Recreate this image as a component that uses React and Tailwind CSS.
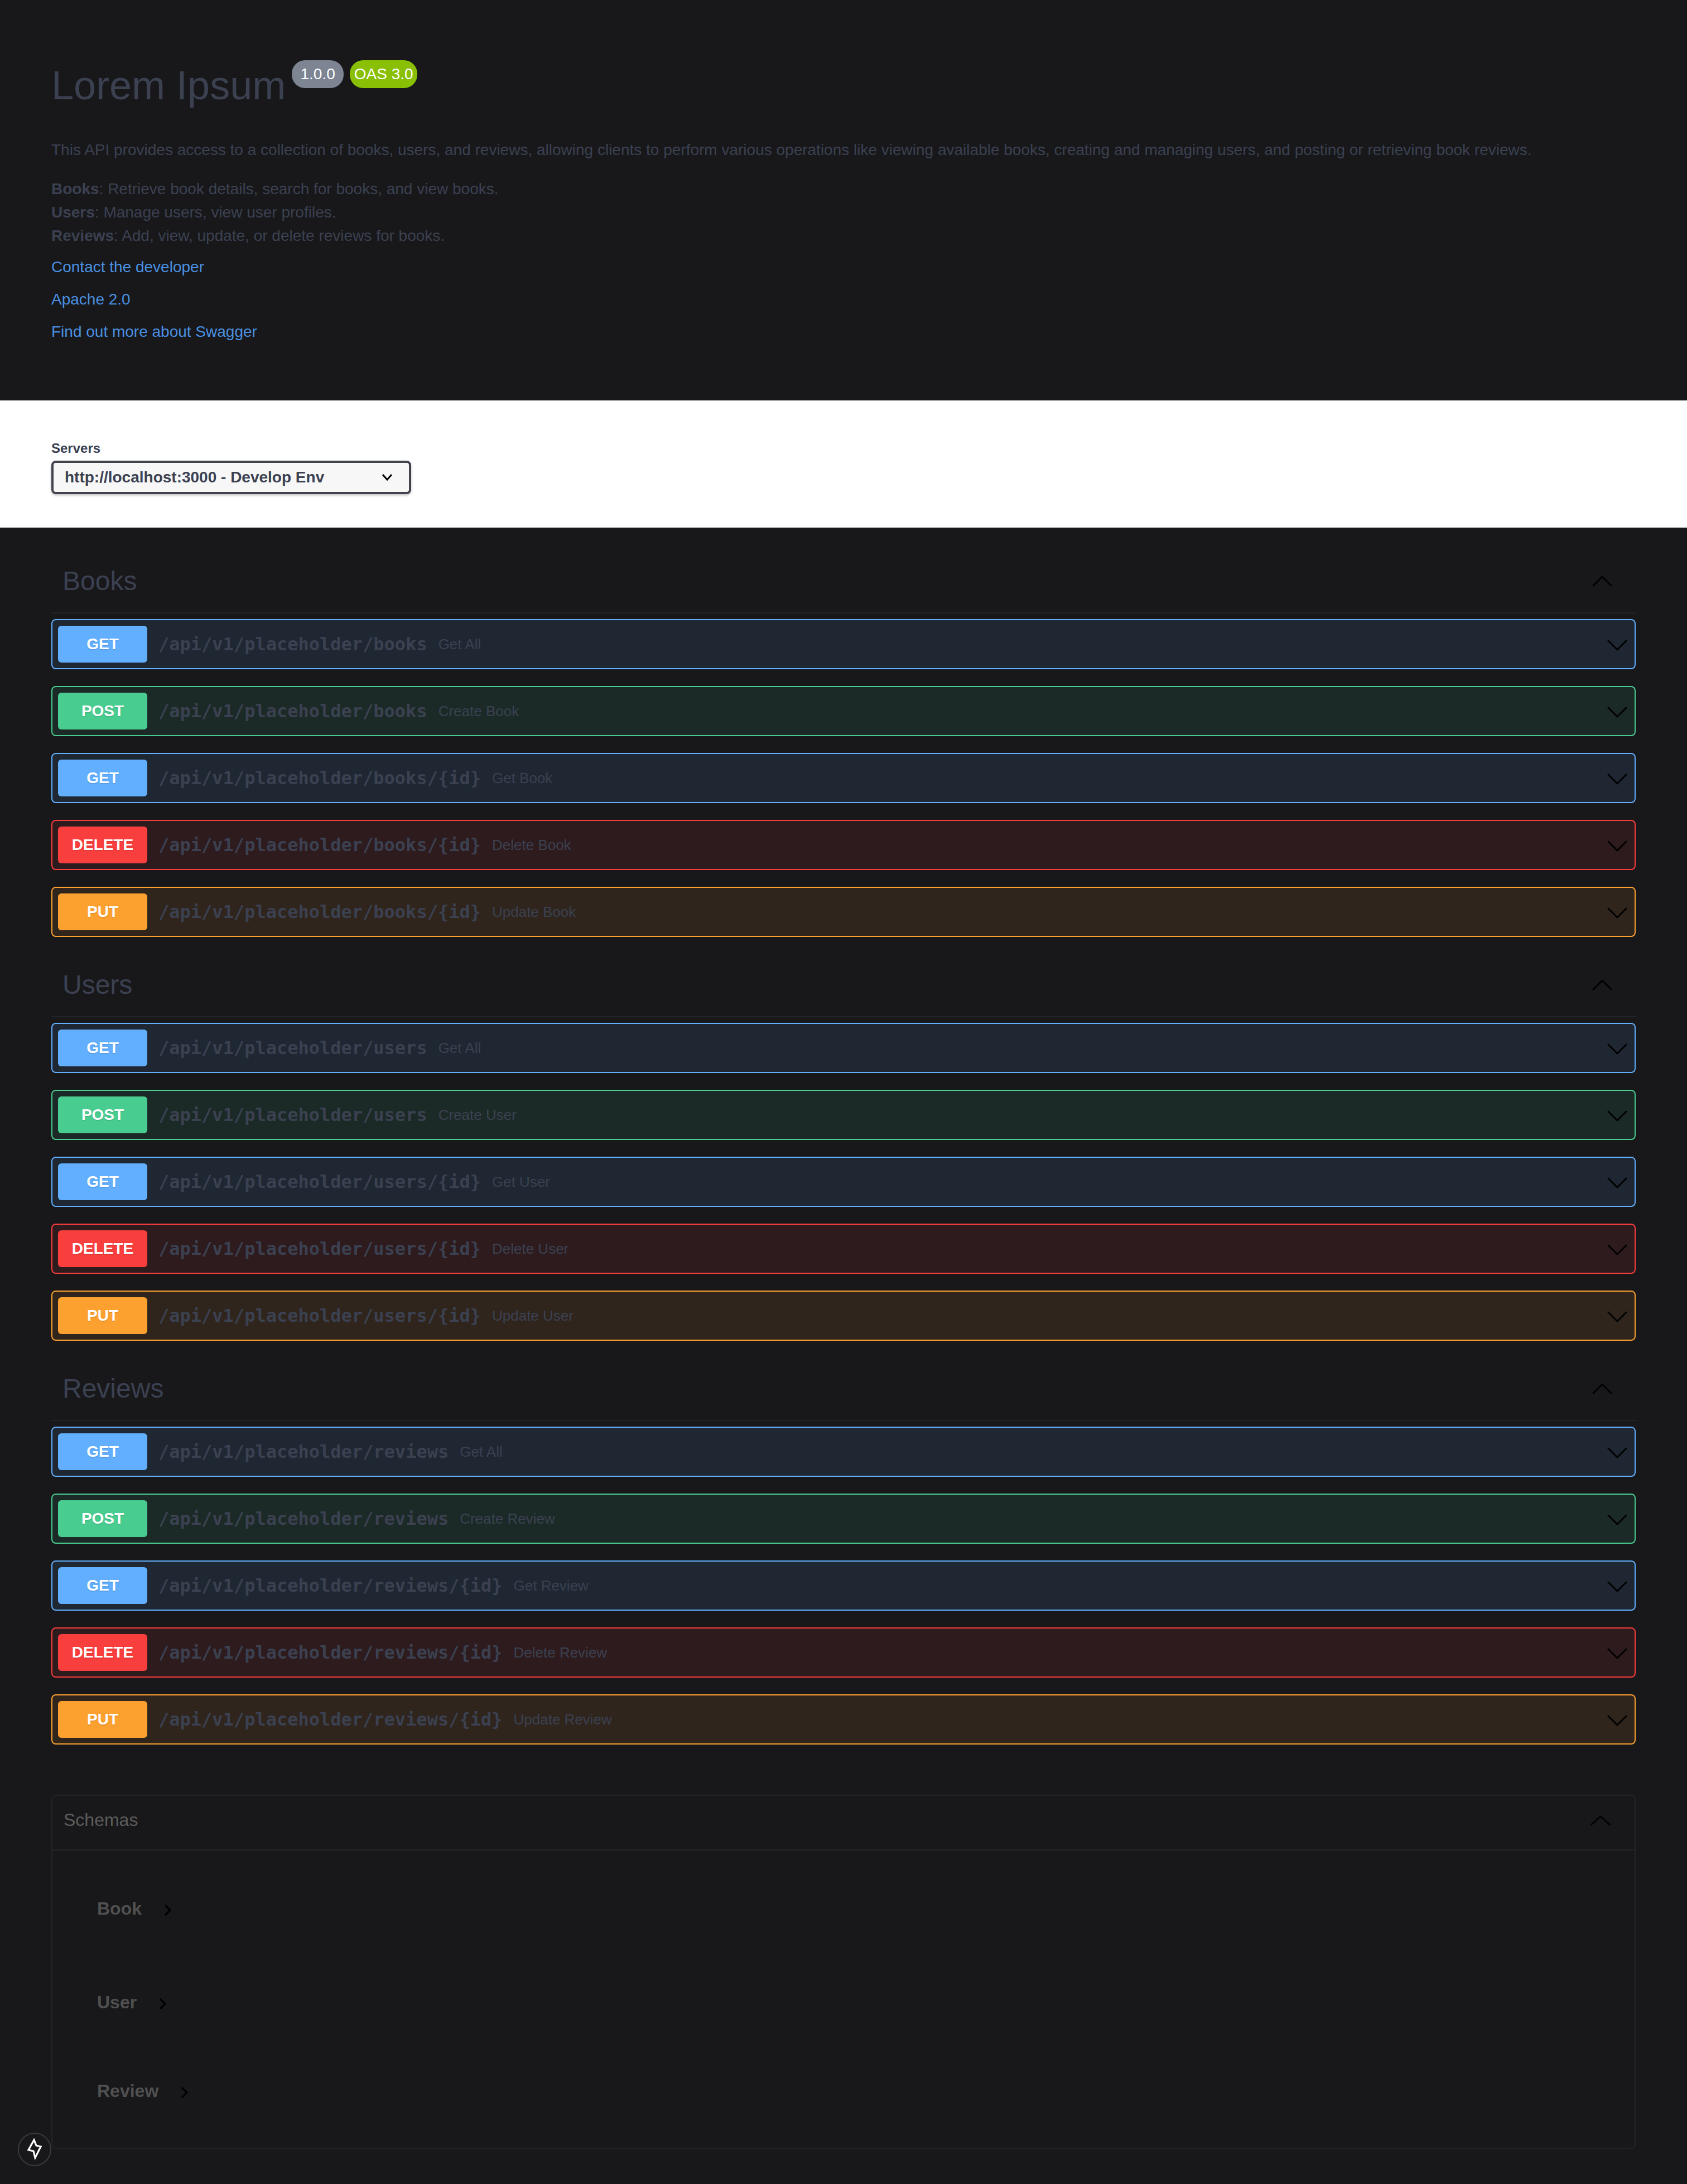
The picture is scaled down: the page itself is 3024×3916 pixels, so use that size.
const METHODS = {
  GET: { box: "border-[#61affe] bg-[#61affe]/10", btn: "bg-[#61affe]" },
  POST: { box: "border-[#49cc90] bg-[#49cc90]/10", btn: "bg-[#49cc90]" },
  DELETE: { box: "border-[#f93e3e] bg-[#f93e3e]/10", btn: "bg-[#f93e3e]" },
  PUT: { box: "border-[#fca130] bg-[#fca130]/10", btn: "bg-[#fca130]" },
};

const crud = (plural, Single) => [
  ["GET", `/api/v1/placeholder/${plural}`, "Get All"],
  ["POST", `/api/v1/placeholder/${plural}`, `Create ${Single}`],
  ["GET", `/api/v1/placeholder/${plural}/{id}`, `Get ${Single}`],
  ["DELETE", `/api/v1/placeholder/${plural}/{id}`, `Delete ${Single}`],
  ["PUT", `/api/v1/placeholder/${plural}/{id}`, `Update ${Single}`],
];

const TAGS = [
  { name: "Books", ops: crud("books", "Book") },
  { name: "Users", ops: crud("users", "User") },
  { name: "Reviews", ops: crud("reviews", "Review") },
];

function Chevron({ up }) {
  return (
    <svg width="36" height="20" viewBox="0 0 36 20" fill="none" className="shrink-0">
      <polyline
        points={up ? "2,18 18,2 34,18" : "2,2 18,18 34,2"}
        stroke="#000"
        strokeWidth="3"
        strokeLinecap="round"
        strokeLinejoin="round"
      />
    </svg>
  );
}

function ModelRow({ name, className }) {
  return (
    <div className={`flex h-[36px] items-center gap-[40px] pl-[80px] ${className}`}>
      <span className="text-[32px] font-bold leading-[36px] text-[#505050]">{name}</span>
      <svg width="14" height="22" viewBox="0 0 14 22" fill="none" className="mt-[5px] shrink-0">
        <polyline points="2,2 11,11 2,20" stroke="#000" strokeWidth="3.2" />
      </svg>
    </div>
  );
}

function Operation({ method, path, summary }) {
  const m = METHODS[method];
  return (
    <div className={`mb-[30px] flex h-[90px] items-center rounded-[8px] border-2 pl-[10px] pr-[13px] ${m.box}`}>
      <div
        className={`flex h-[66px] w-[160px] shrink-0 items-center justify-center rounded-[6px] text-[28px] font-bold text-white [text-shadow:0_2px_0_rgba(0,0,0,0.1)] ${m.btn}`}
      >
        {method}
      </div>
      <span className="ml-[20px] font-['DejaVu_Sans_Mono',monospace] text-[32px] font-bold text-[#3b4151]">{path}</span>
      <span className="ml-[20px] text-[26px] text-[#3b4151]">{summary}</span>
      <div className="ml-auto mt-[4px] flex">
        <Chevron />
      </div>
    </div>
  );
}

function Tag({ name, ops }) {
  return (
    <section>
      <div className="mb-[10px] flex h-[114px] items-center justify-between border-b-2 border-[#22242b] pl-[20px] pr-[42px]">
        <h3 className="text-[48px] font-normal leading-[56px] text-[#3b4151]">{name}</h3>
        <Chevron up />
      </div>
      {ops.map(([method, path, summary], i) => (
        <Operation key={i} method={method} path={path} summary={summary} />
      ))}
    </section>
  );
}

export default function App() {
  return (
    <div className="relative min-h-[3916px] bg-[#18181b] font-['Liberation_Sans',Arial,sans-serif]">
      <header className="px-[92px] pb-[102px] pt-[113px]">
        <div className="flex items-start">
          <h1 className="text-[72px] font-normal leading-[80px] text-[#3b4151]">Lorem Ipsum</h1>
          <div className="-mt-[5px] ml-[11px] flex gap-[11px]">
            <span className="flex h-[50px] w-[93px] items-center justify-center rounded-[24px] bg-[#7d8492] text-[28px] text-white">1.0.0</span>
            <span className="flex h-[50px] w-[121px] items-center justify-center rounded-[24px] bg-[#89bf04] text-[28px] text-white">OAS 3.0</span>
          </div>
        </div>
        <p className="mt-[55px] text-[28px] leading-[42px] text-[#3b4151]">
          This API provides access to a collection of books, users, and reviews, allowing clients to perform various operations like viewing available books, creating and managing users, and posting or retrieving book reviews.
        </p>
        <div className="mt-[28px] text-[28px] leading-[42px] text-[#3b4151]">
          <div><b>Books</b>: Retrieve book details, search for books, and view books.</div>
          <div><b>Users</b>: Manage users, view user profiles.</div>
          <div><b>Reviews</b>: Add, view, update, or delete reviews for books.</div>
        </div>
        <div className="mt-[14px] flex flex-col gap-[16px] text-[28px] leading-[42px] text-[#4990e2]">
          <a>Contact the developer</a>
          <a>Apache 2.0</a>
          <a>Find out more about Swagger</a>
        </div>
      </header>

      <div className="h-[228px] bg-white px-[92px] pt-[72px]">
        <div className="text-[24px] font-bold leading-[28px] text-[#3b4151]">Servers</div>
        <div className="mt-[8px] flex h-[60px] w-[645px] items-center justify-between rounded-[8px] border-4 border-[#41444e] bg-[#f7f7f7] pl-[20px] pr-[29px] shadow-[0_2px_4px_0_rgba(0,0,0,0.25)]">
          <span className="text-[28px] font-bold text-[#3b4151]">http://localhost:3000 - Develop Env</span>
          <svg width="20" height="14" viewBox="0 0 20 14" fill="none">
            <polyline points="2,2 10,11 18,2" stroke="#000" strokeWidth="3" />
          </svg>
        </div>
      </div>

      <main className="px-[92px] pt-[40px]">
        {TAGS.map((t) => (
          <Tag key={t.name} name={t.name} ops={t.ops} />
        ))}

        <section className="mt-[90px] rounded-[8px] border-2 border-[#22242b]">
          <div className="flex h-[98px] items-center justify-between border-b-2 border-[#22242b] pl-[20px] pr-[43px]">
            <h4 className="mb-[10px] text-[32px] font-normal text-[#5c5c5c]">Schemas</h4>
            <svg width="36" height="20" viewBox="0 0 36 20" fill="none" className="mb-[8px] shrink-0">
              <polyline points="1,18 18,3 35,18" stroke="#000" strokeWidth="3" strokeLinecap="round" strokeLinejoin="round" />
            </svg>
          </div>
          <div className="pb-[84px] pt-[86px]">
            <ModelRow name="Book" className="mb-[132px]" />
            <ModelRow name="User" className="mb-[123px]" />
            <ModelRow name="Review" />
          </div>
        </section>
      </main>

      <button className="fixed bottom-[32px] left-[32px] flex h-[60px] w-[60px] items-center justify-center rounded-full border-2 border-[#3a3a3c] bg-[#18181b]">
        <svg width="34" height="40" viewBox="0 0 34 40" fill="none">
          <polygon points="16,3 6,21 15,23 18,35 28,15 20,13" stroke="#fff" strokeWidth="3.2" strokeLinejoin="miter" />
        </svg>
      </button>
    </div>
  );
}
